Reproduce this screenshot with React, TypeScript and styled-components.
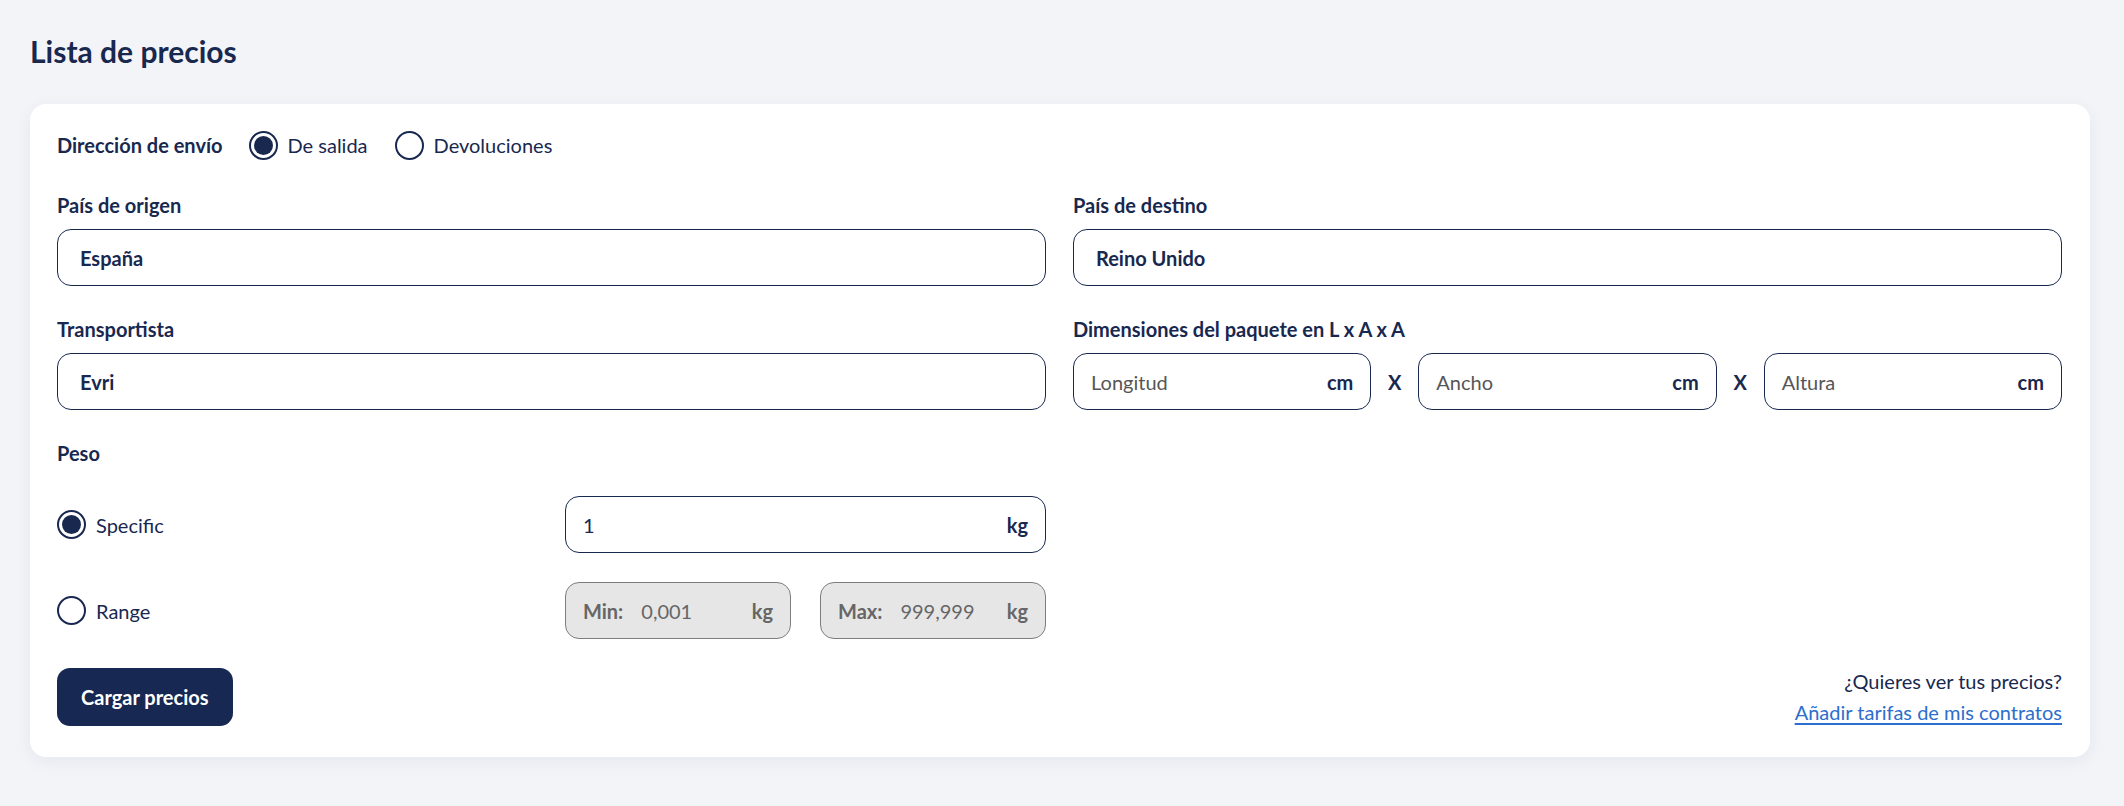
import React, { useState } from "react";
import styled, { createGlobalStyle } from "styled-components";

const navy = "#18284f";

const GlobalStyle = createGlobalStyle`
  body {
    margin: 0;
    background: #f3f4f8;
    font-family: "Lato", "Noto Sans", sans-serif;
    color: ${navy};
  }
`;

const Page = styled.div`
  padding: 31px 34px 40px 30px;
`;

const Title = styled.h1`
  margin: 0 0 33px;
  font-size: 30px;
  line-height: 40px;
  font-weight: 700;
  color: ${navy};
`;

const Card = styled.div`
  background: #fff;
  border-radius: 16px;
  padding: 26px 28px 29px 27px;
  box-shadow: 0 4px 18px rgba(24, 40, 79, 0.06);
`;

const DirectionRow = styled.div`
  display: flex;
  align-items: center;
  height: 30px;
`;

const Label = styled.div`
  font-size: 20px;
  line-height: 27px;
  font-weight: 700;
  color: ${navy};
`;

const DirectionLabel = styled(Label)`
  margin-right: 26px;
`;

const RadioOption = styled.label`
  display: flex;
  align-items: center;
  gap: 10px;
  margin-right: 27px;
  font-size: 20px;
  line-height: 30px;
  cursor: pointer;
`;

const RadioCircle = styled.span<{ $checked?: boolean }>`
  box-sizing: border-box;
  width: 29px;
  height: 29px;
  border-radius: 50%;
  border: 2px solid ${navy};
  display: inline-flex;
  align-items: center;
  justify-content: center;
  flex-shrink: 0;

  &::after {
    content: "";
    width: 19px;
    height: 19px;
    border-radius: 50%;
    background: ${navy};
    display: ${(p) => (p.$checked ? "block" : "none")};
  }
`;

const FormGrid = styled.div`
  display: grid;
  grid-template-columns: 1fr 1fr;
  column-gap: 27px;
  row-gap: 30px;
  margin-top: 32px;
`;

const FieldGroup = styled.div`
  display: flex;
  flex-direction: column;
  gap: 10px;
`;

const Input = styled.div<{ $pad?: number; $disabled?: boolean }>`
  box-sizing: border-box;
  height: 57px;
  min-height: 57px;
  display: flex;
  align-items: center;
  padding: 0 17px 0 ${(p) => p.$pad ?? 17}px;
  border: 1.5px solid ${(p) => (p.$disabled ? "#7d7d7d" : navy)};
  background: ${(p) => (p.$disabled ? "#e6e6e6" : "#fff")};
  border-radius: 14px;
  font-size: 20px;
  color: ${(p) => (p.$disabled ? "#666" : navy)};
  flex: 1;
  min-width: 0;
`;

const Value = styled.span<{ $bold?: boolean; $muted?: boolean }>`
  flex: 1;
  font-weight: ${(p) => (p.$bold ? 700 : 400)};
  color: ${(p) => (p.$muted ? "#565656" : "inherit")};
`;

const Prefix = styled.span`
  font-weight: 700;
  margin-right: 18px;
`;

const Unit = styled.span`
  font-weight: 700;
`;

const DimRow = styled.div`
  display: flex;
  align-items: center;
`;

const Times = styled.span`
  width: 47px;
  text-align: center;
  font-weight: 700;
  font-size: 20px;
`;

const WeightSection = styled.div`
  margin-top: 30px;
`;

const WeightGrid = styled.div`
  display: grid;
  grid-template-columns: 989px;
  margin-top: 29px;
  row-gap: 29px;
`;

const WeightRow = styled.div`
  display: grid;
  grid-template-columns: 1fr 1fr;
  column-gap: 27px;
  align-items: center;
`;

const RangePair = styled.div`
  display: flex;
  gap: 29px;
`;

const Footer = styled.div`
  margin-top: 27px;
  display: flex;
  justify-content: space-between;
  align-items: center;
`;

const Button = styled.button`
  height: 58px;
  padding: 0 24px;
  border: none;
  border-radius: 13px;
  background: #172853;
  color: #fff;
  font-family: inherit;
  font-size: 20px;
  font-weight: 700;
  cursor: pointer;
`;

const Hint = styled.div`
  text-align: right;
  font-size: 20px;
  line-height: 31px;
  color: ${navy};
`;

const HintLink = styled.a`
  display: block;
  color: #2c6ecd;
  text-decoration: underline;
  text-underline-offset: 3px;
  cursor: pointer;
`;

function Radio(props: { checked?: boolean; label: string; onClick?: () => void }) {
  return (
    <RadioOption onClick={props.onClick}>
      <RadioCircle $checked={props.checked} />
      {props.label}
    </RadioOption>
  );
}

export default function App() {
  const [direction, setDirection] = useState("out");
  const [mode, setMode] = useState("specific");

  return (
    <>
      <GlobalStyle />
      <Page>
        <Title>Lista de precios</Title>
        <Card>
          <DirectionRow>
            <DirectionLabel>Dirección de envío</DirectionLabel>
            <Radio label="De salida" checked={direction === "out"} onClick={() => setDirection("out")} />
            <Radio label="Devoluciones" checked={direction === "ret"} onClick={() => setDirection("ret")} />
          </DirectionRow>

          <FormGrid>
            <FieldGroup>
              <Label>País de origen</Label>
              <Input $pad={22}>
                <Value $bold>España</Value>
              </Input>
            </FieldGroup>
            <FieldGroup>
              <Label>País de destino</Label>
              <Input $pad={22}>
                <Value $bold>Reino Unido</Value>
              </Input>
            </FieldGroup>
            <FieldGroup>
              <Label>Transportista</Label>
              <Input $pad={22}>
                <Value $bold>Evri</Value>
              </Input>
            </FieldGroup>
            <FieldGroup>
              <Label>Dimensiones del paquete en L x A x A</Label>
              <DimRow>
                <Input>
                  <Value $muted>Longitud</Value>
                  <Unit>cm</Unit>
                </Input>
                <Times>X</Times>
                <Input>
                  <Value $muted>Ancho</Value>
                  <Unit>cm</Unit>
                </Input>
                <Times>X</Times>
                <Input>
                  <Value $muted>Altura</Value>
                  <Unit>cm</Unit>
                </Input>
              </DimRow>
            </FieldGroup>
          </FormGrid>

          <WeightSection>
            <Label>Peso</Label>
            <WeightGrid>
              <WeightRow>
                <Radio label="Specific" checked={mode === "specific"} onClick={() => setMode("specific")} />
                <Input>
                  <Value>1</Value>
                  <Unit>kg</Unit>
                </Input>
              </WeightRow>
              <WeightRow>
                <Radio label="Range" checked={mode === "range"} onClick={() => setMode("range")} />
                <RangePair>
                  <Input $disabled>
                    <Prefix>Min:</Prefix>
                    <Value>0,001</Value>
                    <Unit>kg</Unit>
                  </Input>
                  <Input $disabled>
                    <Prefix>Max:</Prefix>
                    <Value>999,999</Value>
                    <Unit>kg</Unit>
                  </Input>
                </RangePair>
              </WeightRow>
            </WeightGrid>
          </WeightSection>

          <Footer>
            <Button>Cargar precios</Button>
            <Hint>
              ¿Quieres ver tus precios?
              <HintLink>Añadir tarifas de mis contratos</HintLink>
            </Hint>
          </Footer>
        </Card>
      </Page>
    </>
  );
}
